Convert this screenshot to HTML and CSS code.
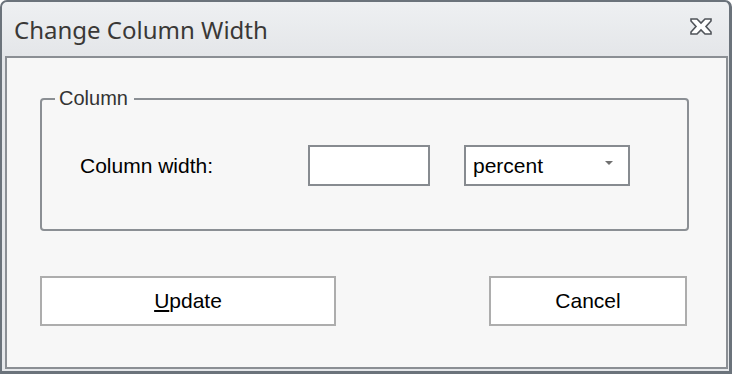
FILE: index.html
```html
<!DOCTYPE html>
<html lang="en">
<head>
    <meta charset="UTF-8">
    <meta name="viewport" content="width=device-width, initial-scale=1.0">
    <title>Change Column Width</title>
    <link rel="stylesheet" href="styles.css">
</head>
<body>
    <div class="window">
        <div class="titlebar">
            <div class="title">Change Column Width</div>
            <button class="close-btn" aria-label="Close">
                <svg width="22" height="17" viewBox="0 0 22 17">
                    <polygon points="1,1 7,1 11,5 15,1 21,1 21,3 16,8.5 21,14 21,16 15,16 11,12 7,16 1,16 1,14 6,8.5 1,3"
                             fill="#fff" stroke="#50545a" stroke-width="1.6" stroke-linejoin="miter"/>
                </svg>
            </button>
        </div>

        <div class="content">
            <div class="group">
                <div class="group-title">Column</div>
                <div class="field-row">
                    <label class="field-label" for="col-width">Column width:</label>
                    <input type="text" id="col-width" class="text-input">
                    <div class="select">
                        <span>percent</span>
                        <span class="select-arrow"></span>
                    </div>
                </div>
            </div>

            <div class="actions">
                <button class="btn btn-update"><u>U</u>pdate</button>
                <button class="btn btn-cancel">Cancel</button>
            </div>
        </div>
    </div>
</body>
</html>
```

FILE: styles.css
```css
* {
    margin: 0;
    padding: 0;
    box-sizing: border-box;
}

:root {
    --frame-color: #6b737b;
    --line-color: #8b8f94;
    --panel-bg: #f7f7f7;
}

body {
    background: #fff;
    font-family: 'Liberation Sans', Arial, sans-serif;
}

.window {
    width: 732px;
    height: 374px;
    display: flex;
    flex-direction: column;
    border: 2px solid var(--frame-color);
    border-right-width: 3px;
    border-bottom-width: 3px;
    border-radius: 7px 7px 0 0;
    background: linear-gradient(#eef0f2, #e4e6e9 54px, #e6e8eb);
}

.titlebar {
    height: 54px;
    display: flex;
    align-items: center;
    justify-content: space-between;
    padding: 0 17px 0 12px;
}

.title {
    font-family: 'Noto Sans', 'Open Sans', sans-serif;
    font-size: 24px;
    color: #3a3836;
    padding-top: 1px;
}

.close-btn {
    background: none;
    border: none;
    display: flex;
    margin-top: -5px;
}

.content {
    flex: 1;
    margin: 0 1px 2px 3px;
    border: 2px solid var(--line-color);
    background: var(--panel-bg);
    padding: 40px 0 0 33px;
}

.group {
    position: relative;
    width: 649px;
    height: 133px;
    border: 2px solid var(--line-color);
    border-radius: 4px;
    display: flex;
    align-items: center;
    padding-left: 38px;
}

.group-title {
    position: absolute;
    top: -14px;
    left: 13px;
    padding: 0 6px 0 4px;
    background: var(--panel-bg);
    font-size: 20px;
    color: #333;
    line-height: 24px;
}

.field-row {
    display: flex;
    align-items: center;
    margin-top: 2px;
}

.field-label {
    width: 228px;
    font-size: 21px;
    color: #000;
}

.text-input {
    width: 122px;
    height: 41px;
    border: 2px solid #878b90;
    background: #fff;
    font-size: 21px;
    font-family: inherit;
    padding: 0 6px;
    outline: none;
}

.select {
    width: 166px;
    height: 41px;
    margin-left: 34px;
    border: 2px solid #878b90;
    background: #fff;
    display: flex;
    align-items: center;
    justify-content: space-between;
    padding: 0 15px 0 7px;
    font-size: 21px;
    color: #000;
}

.select-arrow {
    width: 0;
    height: 0;
    border-left: 4px solid transparent;
    border-right: 4px solid transparent;
    border-top: 4px solid #707070;
    margin-top: -6px;
}

.actions {
    display: flex;
    margin-top: 45px;
    padding-right: 39px;
}

.btn {
    height: 50px;
    border: 2px solid #adadad;
    background: #fff;
    font-family: inherit;
    font-size: 21px;
    color: #000;
}

.btn-update {
    width: 296px;
}

.btn-cancel {
    width: 198px;
    margin-left: auto;
}
```
